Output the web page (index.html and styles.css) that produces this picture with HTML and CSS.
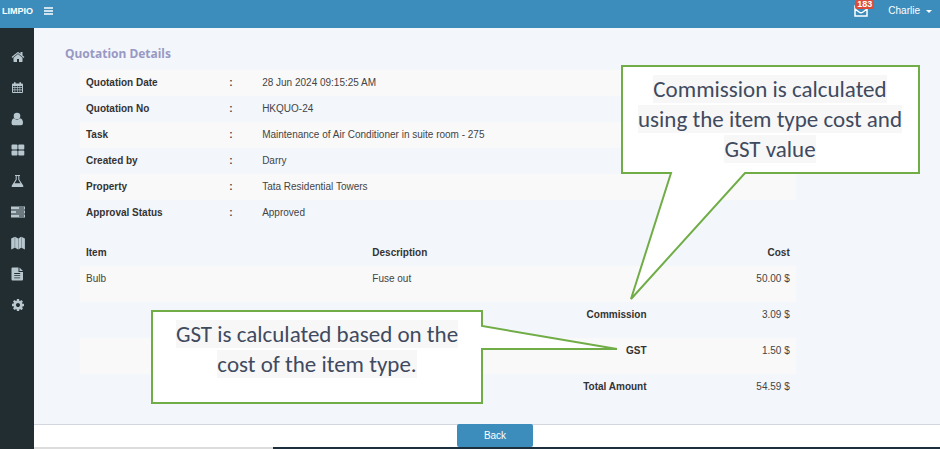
FILE: index.html
```html
<!DOCTYPE html>
<html lang="en">
<head>
    <meta charset="UTF-8">
    <meta name="viewport" content="width=device-width, initial-scale=1.0">
    <title>Quotation Details</title>
    <link rel="stylesheet" href="styles.css">
</head>
<body>
    <header class="topbar">
        <a href="#" class="logo">LIMPIO</a>
        <button class="menu-toggle" aria-label="Toggle menu">
            <svg width="9" height="8" viewBox="0 0 9 8"><path d="M0 1h9M0 4h9M0 7h9"/></svg>
        </button>
        <a href="#" class="mail" aria-label="Messages">
            <svg width="14" height="12" viewBox="0 0 14 12"><path d="M1 1h12v10H1zM1 4l4 3q2 1.500 4 0L13 4"/></svg>
            <span class="badge">183</span>
        </a>
        <button class="user-menu">Charlie <span class="caret"></span></button>
    </header>

    <div class="layout">
        <nav class="sidebar">
            <a href="#" aria-label="Home">
                <svg viewBox="0 0 1792 1792"><path d="M1472 992v480q0 26-19 45t-45 19h-384v-384h-256v384h-384q-26 0-45-19t-19-45v-480q0-1 .5-3t.5-3l575-474 575 474q1 2 1 6zm223-69l-62 74q-8 9-21 11h-3q-13 0-21-7l-692-577-692 577q-12 8-24 7-13-2-21-11l-62-74q-8-10-7-23.500t11-21.500l719-599q32-26 76-26t76 26l244 204v-195q0-14 9-23t23-9h192q14 0 23 9t9 23v408l219 182q10 8 11 21.500t-7 23.500z"/></svg>
            </a>
            <a href="#" aria-label="Calendar">
                <svg viewBox="0 0 14 14"><path fill-rule="evenodd" d="M1 3.500q0-1 1-1h1V2q0-1 .8-1t.8 1v.5h3.800V2q0-1 .8-1t.8 1v.5h1q1 0 1 1V11q0 1-1 1H2q-1 0-1-1zM2 5v1.300h1.600V5zM4.200 5v1.300h1.900V5zM6.700 5v1.300h1.900V5zM9.200 5v1.300H11V5zM2 7v1.500h1.600V7zM4.200 7v1.500h1.900V7zM6.700 7v1.500h1.900V7zM9.200 7v1.500H11V7zM2 9.200V11h1.600V9.200zM4.200 9.200V11h1.900V9.200zM6.700 9.200V11h1.900V9.200zM9.200 9.200V11H11V9.200z"/></svg>
            </a>
            <a href="#" aria-label="Users">
                <svg viewBox="0 0 14 14"><circle cx="6" cy="4" r="3.300"/><path d="M3 6.300Q6 9.200 9 6.300Q12 7 12 11Q12 13.200 10 13.200H2.500Q.5 13.200 .5 11Q.5 7 3 6.300z"/></svg>
            </a>
            <a href="#" aria-label="Dashboard">
                <svg viewBox="0 0 14 14"><rect x=".5" y="1.500" width="6" height="5" rx="1"/><rect x="7.300" y="1.500" width="6" height="5" rx="1"/><rect x=".5" y="7.400" width="6" height="5" rx="1"/><rect x="7.300" y="7.400" width="6" height="5" rx="1"/></svg>
            </a>
            <a href="#" aria-label="Laboratory">
                <svg viewBox="0 0 14 14"><path fill-rule="evenodd" d="M4 1h5v1h-.7v3.500l3.900 6q.8 1.500-.8 1.500H1.600q-1.600 0-.8-1.500l3.900-6V2H4zM5.700 2v3.800L3.500 9.200h6L7.300 5.800V2z"/></svg>
            </a>
            <a href="#" aria-label="Servers">
                <svg viewBox="0 0 14 14"><path fill-rule="evenodd" d="M0 1.500h14v3H0zM8 2.600v.8h5v-.8zM0 5.500h14v3H0zM5 6.600v.8h8v-.8zM0 9.500h14v3H0zM8 10.600v.8h5v-.8z"/></svg>
            </a>
            <a href="#" aria-label="Map">
                <svg viewBox="0 0 14 14"><path d="M.2 2.500L3.800.7v11L.2 13.500zM4.100.7l3 1.700v11L4.100 11.700zM7.400 2.400L10.100.7v11L7.400 13.400zM10.400.7l3.500 1.800v11l-3.500-1.800z"/></svg>
            </a>
            <a href="#" aria-label="Documents">
                <svg viewBox="0 0 14 14"><path fill-rule="evenodd" d="M.5 1.500Q.5 .5 1.500 .5h6V5H12v7.500q0 1-1 1H1.500q-1 0-1-1zM3.200 6v.9h6V6zM3.200 8.200v.9h6v-.9zM3.200 10.400v.9h6v-.9zM8.500.5L12 4H8.500z"/></svg>
            </a>
            <a href="#" aria-label="Settings">
                <svg viewBox="0 0 1792 1792"><path d="M1152 896q0-106-75-181t-181-75-181 75-75 181 75 181 181 75 181-75 75-181zm512-109v222q0 12-8 23t-20 13l-185 28q-19 54-39 91 35 50 107 138 10 12 10 25t-9 23q-27 37-99 108t-94 71q-12 0-26-9l-138-108q-44 23-91 38-16 136-29 186-7 28-36 28h-222q-14 0-24.500-8.500t-11.500-21.500l-28-184q-49-16-90-37l-141 107q-10 9-25 9-14 0-25-11-126-114-165-168-7-10-7-23 0-12 8-23 15-21 51-66.500t54-70.500q-27-50-41-99l-183-27q-13-2-21-12.500t-8-23.500v-222q0-12 8-23t19-13l186-28q14-46 39-92-40-57-107-138-10-12-10-24 0-10 9-23 26-36 98.500-107.500t94.500-71.500q13 0 26 10l138 107q44-23 91-38 16-136 29-186 7-28 36-28h222q14 0 24.500 8.500t11.500 21.500l28 184q49 16 90 37l142-107q9-9 24-9 13 0 25 10 129 119 165 170 7 8 7 22 0 12-8 23-15 21-51 66.500t-54 70.500q26 50 41 98l183 28q13 2 21 12.500t8 23.500z"/></svg>
            </a>
        </nav>

        <div class="page">
            <main class="content">
                <h1>Quotation Details</h1>

                <table class="details">
                    <tr><th scope="row">Quotation Date</th><td class="colon">:</td><td>28 Jun 2024 09:15:25 AM</td></tr>
                    <tr><th scope="row">Quotation No</th><td class="colon">:</td><td>HKQUO-24</td></tr>
                    <tr><th scope="row">Task</th><td class="colon">:</td><td>Maintenance of Air Conditioner in suite room - 275</td></tr>
                    <tr><th scope="row">Created by</th><td class="colon">:</td><td>Darry</td></tr>
                    <tr><th scope="row">Property</th><td class="colon">:</td><td>Tata Residential Towers</td></tr>
                    <tr><th scope="row">Approval Status</th><td class="colon">:</td><td>Approved</td></tr>
                </table>

                <table class="items">
                    <thead>
                        <tr><th>Item</th><th>Description</th><th class="amount">Cost</th></tr>
                    </thead>
                    <tbody>
                        <tr><td>Bulb</td><td>Fuse out</td><td class="amount">50.00 $</td></tr>
                        <tr><td></td><th scope="row" class="amount">Commission</th><td class="amount">3.09 $</td></tr>
                        <tr><td></td><th scope="row" class="amount">GST</th><td class="amount">1.50 $</td></tr>
                        <tr><td></td><th scope="row" class="amount">Total Amount</th><td class="amount">54.59 $</td></tr>
                    </tbody>
                </table>
            </main>

            <footer class="actions">
                <button class="btn">Back</button>
            </footer>
        </div>
    </div>
    <div class="bottom-strip"></div>

    <!-- Callouts over the page -->
    <div class="callout callout-commission">
        <svg width="300" height="238" viewBox="0 0 300 238"><path d="M2 2H299V109H125L11 235L51 109H2z"/></svg>
        <p><span>Commission is calculated<br>using the item type cost and<br>GST value</span></p>
    </div>
    <div class="callout callout-gst">
        <svg width="470" height="96" viewBox="0 0 470 96"><path d="M2 2H332V17L467 40H332V94H2z"/></svg>
        <p><span>GST is calculated based on the<br>cost of the item type.</span></p>
    </div>
</body>
</html>
```
FILE: styles.css
```css
* {
    box-sizing: border-box;
}

body {
    margin: 0;
    min-height: 100vh;
    display: flex;
    flex-direction: column;
    position: relative;
    font-family: "Liberation Sans", Arial, sans-serif;
    font-size: 10px;
    line-height: 14px;
    color: #444;
    background: #f3f6fb;
}

a {
    color: inherit;
    text-decoration: none;
}

button {
    font: inherit;
    color: inherit;
    background: none;
    border: none;
    padding: 0;
    cursor: pointer;
}

/* Top bar */
.topbar {
    display: flex;
    align-items: center;
    height: 28px;
    padding: 0 8px 6px 2px;
    background: #3c8dbc;
    color: #fff;
}

.logo {
    font-size: 9px;
    font-weight: bold;
}

.menu-toggle {
    display: flex;
    margin-left: 11px;
}

.topbar svg {
    display: block;
    fill: none;
    stroke: #fff;
    stroke-width: 1.5;
}

.mail {
    position: relative;
    margin-left: auto;
    margin-right: 20px;
}

.badge {
    position: absolute;
    top: -5px;
    left: 1px;
    padding: 0 2px;
    border-radius: 2px;
    background: #dd4b39;
    font-size: 9px;
    font-weight: bold;
    line-height: 9px;
}

.user-menu {
    display: flex;
    align-items: center;
    gap: 6px;
}

.caret {
    border: 3px solid transparent;
    border-top-color: #fff;
    border-bottom: none;
}

/* Sidebar and page */
.layout {
    display: flex;
    flex: 1;
}

.sidebar {
    width: 34px;
    padding-top: 13px;
    background: #222d32;
}

.sidebar a {
    display: flex;
    align-items: center;
    height: 31px;
    padding-left: 11px;
}

.sidebar svg {
    width: 14px;
    height: 14px;
    fill: #b8c7ce;
}

.page {
    flex: 1;
    display: flex;
    flex-direction: column;
}

.content {
    flex: 1;
}

h1 {
    margin: 0 0 8px;
    padding: 17px 0 0 31px;
    font-family: "Noto Sans", sans-serif;
    font-size: 12px;
    line-height: 17px;
    color: #9999c4;
}

/* Tables */
table {
    width: 79%;
    margin-left: 46px;
    border-collapse: collapse;
    table-layout: fixed;
}

th,
td {
    padding: 6px;
    text-align: left;
    vertical-align: top;
}

th {
    color: #333;
}

.details th {
    width: 20%;
}

.details .colon {
    width: 33px;
    font-weight: bold;
}

.details tr:nth-child(odd),
.items tbody tr:nth-child(odd) {
    background: #f9f9f9;
}

.items {
    margin-top: 14px;
}

.items thead th {
    width: 40%;
}

.items thead th:last-child {
    width: 20%;
}

.items tbody th,
.items tbody td {
    padding-bottom: 16px;
}

.items .amount {
    text-align: right;
}

/* Footer */
.actions {
    display: flex;
    justify-content: center;
    padding-left: 16px;
    border-top: 1px solid #d2d6de;
    background: #fff;
}

.btn {
    width: 76px;
    height: 23px;
    margin-top: -1px;
    border-radius: 2px;
    background: #3c8dbc;
    color: #fff;
}

.bottom-strip {
    height: 2px;
    background: linear-gradient(to right, #222d32 34px, #dcdcdc 34px, #dcdcdc 273px, #1d2f3c 273px);
}

/* Callouts */
.callout {
    position: absolute;
}

.callout svg {
    display: block;
    fill: #fff;
    stroke: #70ad47;
    stroke-width: 2;
}

.callout p {
    position: absolute;
    top: 10px;
    left: 0;
    margin: 0;
    font-family: Carlito, Lato, sans-serif;
    font-size: 23px;
    line-height: 30px;
    text-align: center;
    color: #3f4a5f;
    white-space: nowrap;
}

.callout span {
    background: #f7f7f7;
}

.callout-commission {
    top: 64px;
    left: 620px;
}

.callout-commission p {
    width: 300px;
}

.callout-gst {
    top: 309px;
    left: 150px;
}

.callout-gst p {
    width: 334px;
}
```
